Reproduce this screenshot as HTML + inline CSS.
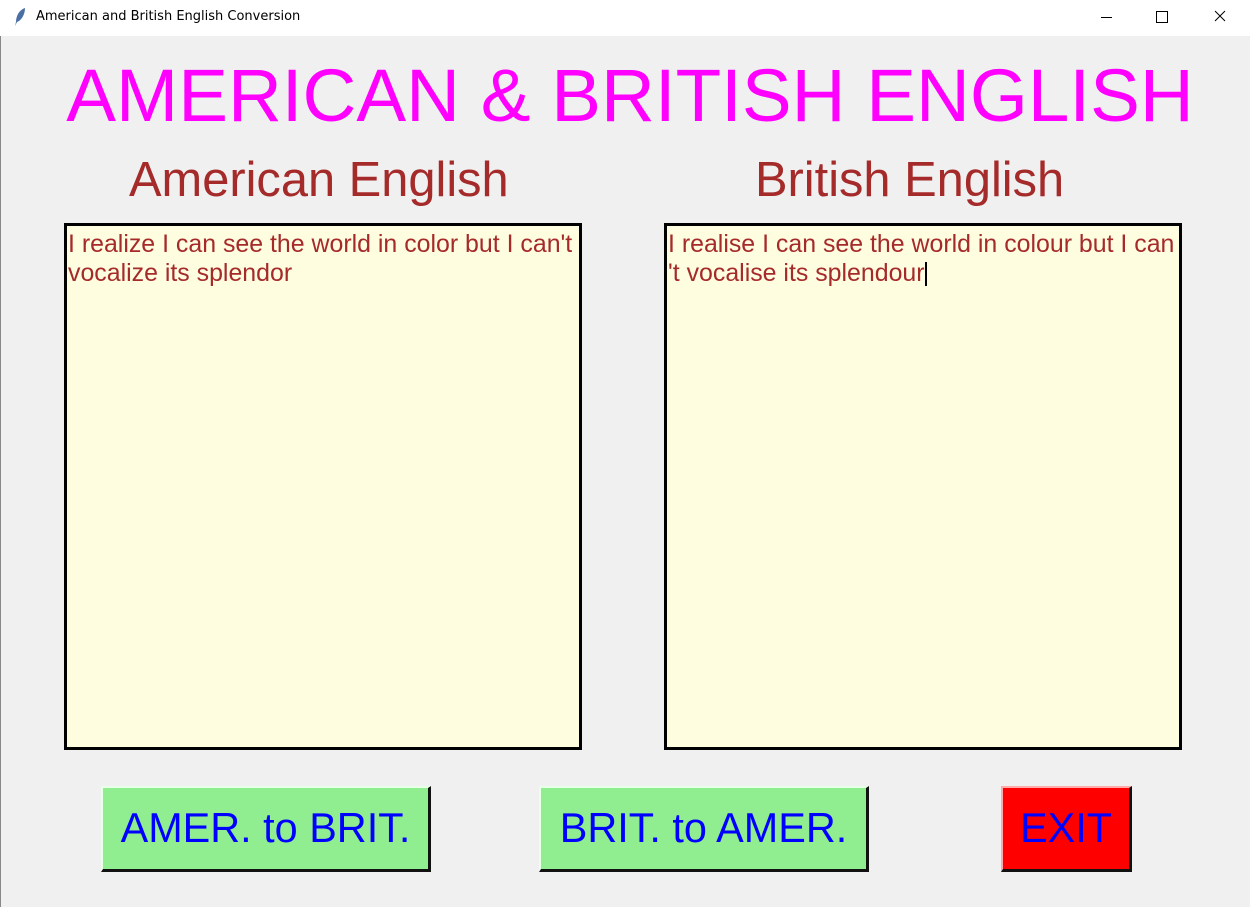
<!DOCTYPE html>
<html><head><style>
body{margin:0;width:1250px;height:907px;background:#f0f0f0;position:relative;overflow:hidden;font-family:"Liberation Sans",Arial,sans-serif}
.tb{position:absolute;left:0;top:0;width:1250px;height:36px;background:#fff}
.tb span{position:absolute;left:36px;top:9px;color:#000;font-family:"DejaVu Sans","Liberation Sans",sans-serif;font-size:13px}
.a{position:absolute;white-space:nowrap}
.box{position:absolute;top:223px;width:511px;height:517px;border:3px solid #000;background:#fffde0;color:#a52a2a;font-family:"Liberation Sans",Arial,sans-serif;font-size:24.9px;line-height:29px;padding:4px 0 0 1px;white-space:nowrap;overflow:hidden}
.btn{position:absolute;top:786px;background:#90ee90;border-top:2px solid #e8ffe8;border-left:2px solid #e8ffe8;border-right:3px solid #111;border-bottom:3px solid #111;color:#0000ff;font-size:41.4px;display:flex;align-items:center;justify-content:center;box-sizing:border-box;height:86px}
</style></head><body>
<div class="tb">
<svg style="position:absolute;left:13px;top:7px" width="14" height="20" viewBox="0 0 14 20"><path d="M12 1 C6 3 3 9 3 15 L2 19 L4 15 C9 13 12 7 12 1Z" fill="#4a6fa5"/></svg>
<span>American and British English Conversion</span>
<div class="a" style="left:1101px;top:17px;width:11px;height:1px;background:#000"></div>
<div class="a" style="left:1156px;top:11px;width:10px;height:10px;border:1px solid #000"></div>
<svg class="a" style="left:1214px;top:10px" width="12" height="12" viewBox="0 0 12 12"><path d="M1 1L11 11M11 1L1 11" stroke="#000" stroke-width="1"/></svg>
</div>
<div style="position:absolute;left:0;top:36px;width:1px;height:871px;background:#888"></div>
<div class="a" style="left:0;width:1260px;text-align:center;top:52px;font-size:74.6px;color:#ff00ff">AMERICAN &amp; BRITISH ENGLISH</div>
<div class="a" style="left:129px;top:152px;font-size:48.8px;color:#a52a2a">American English</div>
<div class="a" style="left:755px;top:152px;font-size:48.8px;color:#a52a2a">British English</div>
<div class="box" style="left:64px">I realize I can see the world in color but I can't<br>vocalize its splendor</div>
<div class="box" style="left:664px">I realise I can see the world in colour but I can<br>'t vocalise its splendour<span style="display:inline-block;width:2px;height:24px;background:#000;vertical-align:-5px"></span></div>
<div class="btn" style="left:101px;width:330px">AMER. to BRIT.</div>
<div class="btn" style="left:539px;width:330px">BRIT. to AMER.</div>
<div class="btn" style="left:1001px;width:131px;background:#ff0000;border-top-color:#ffaaaa;border-left-color:#ffaaaa">EXIT</div>
</body></html>
